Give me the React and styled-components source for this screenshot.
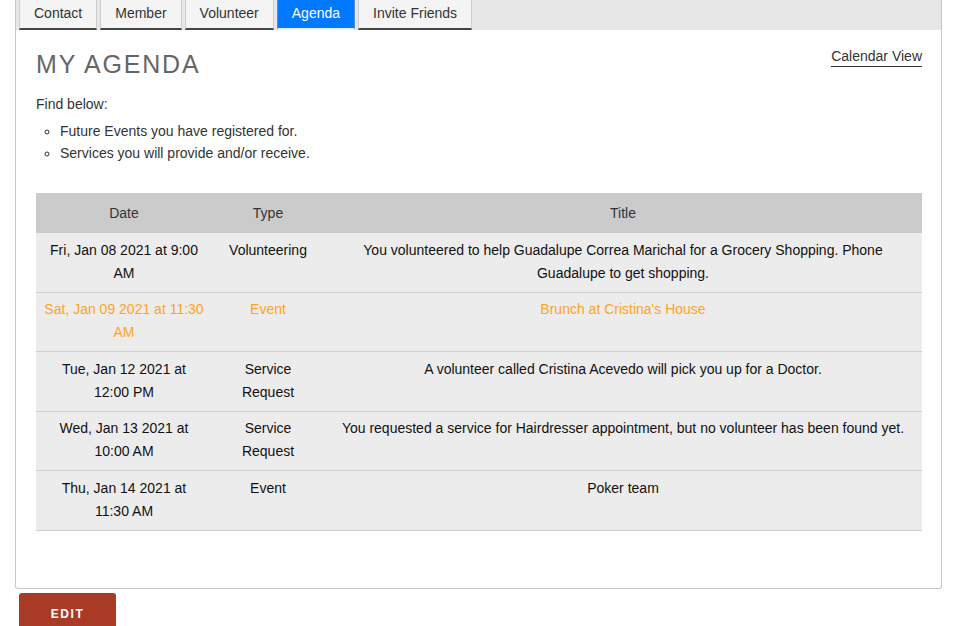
import React from 'react';
import styled, { createGlobalStyle } from 'styled-components';

const tabs = ['Contact', 'Member', 'Volunteer', 'Agenda', 'Invite Friends'];

const rows = [
  {
    date: 'Fri, Jan 08 2021 at 9:00 AM',
    type: 'Volunteering',
    title: 'You volunteered to help Guadalupe Correa Marichal for a Grocery Shopping. Phone Guadalupe to get shopping.',
  },
  {
    date: 'Sat, Jan 09 2021 at 11:30 AM',
    type: 'Event',
    title: "Brunch at Cristina's House",
    highlight: true,
  },
  {
    date: 'Tue, Jan 12 2021 at 12:00 PM',
    type: 'Service Request',
    title: 'A volunteer called Cristina Acevedo will pick you up for a Doctor.',
  },
  {
    date: 'Wed, Jan 13 2021 at 10:00 AM',
    type: 'Service Request',
    title: 'You requested a service for Hairdresser appointment, but no volunteer has been found yet.',
  },
  {
    date: 'Thu, Jan 14 2021 at 11:30 AM',
    type: 'Event',
    title: 'Poker team',
  },
];

export default function App() {
  return (
    <>
      <GlobalStyle />
      <Page>
        <Panel>
          <TabBar>
            {tabs.map((t) => (
              <Tab key={t} active={t === 'Agenda'}>{t}</Tab>
            ))}
          </TabBar>
          <Content>
            <Header>
              <Title>MY AGENDA</Title>
              <CalendarLink href="#">Calendar View</CalendarLink>
            </Header>
            <Intro>Find below:</Intro>
            <List>
              <li>Future Events you have registered for.</li>
              <li>Services you will provide and/or receive.</li>
            </List>
            <Table>
              <colgroup>
                <col style={{ width: 176 }} />
                <col style={{ width: 112 }} />
                <col />
              </colgroup>
              <thead>
                <tr>
                  <Th>Date</Th>
                  <Th>Type</Th>
                  <Th>Title</Th>
                </tr>
              </thead>
              <tbody>
                {rows.map((r) => (
                  <Row key={r.date} highlight={r.highlight}>
                    <Td>{r.date}</Td>
                    <Td>{r.type}</Td>
                    <Td>{r.title}</Td>
                  </Row>
                ))}
              </tbody>
            </Table>
          </Content>
        </Panel>
        <EditButton>EDIT</EditButton>
      </Page>
    </>
  );
}

const GlobalStyle = createGlobalStyle`
  html, body {
    margin: 0;
    padding: 0;
    background: #fff;
    font-family: Arial, "Liberation Sans", sans-serif;
    color: #333;
    overflow: hidden;
  }
`;

const Page = styled.div`
  padding: 0 14px 0 15px;
`;

const Panel = styled.div`
  border: 1px solid #c8c8c8;
  border-top: none;
  border-radius: 0 0 3px 3px;
  background: #fff;
`;

const TabBar = styled.div`
  display: flex;
  gap: 3px;
  padding-left: 3px;
  background: #e7e7e7;
  height: 30px;
`;

const Tab = styled.div`
  box-sizing: border-box;
  height: 30px;
  padding: 0 14px 2px;
  display: flex;
  align-items: center;
  font-size: 14px;
  background: ${(p) => (p.active ? '#0078ff' : '#f4f4f4')};
  color: ${(p) => (p.active ? '#fff' : '#333')};
  border-left: 1px solid ${(p) => (p.active ? '#5a8fd0' : '#cdcdcd')};
  border-right: 1px solid ${(p) => (p.active ? '#5a8fd0' : '#cdcdcd')};
  border-bottom: 2px solid ${(p) => (p.active ? '#e8f1ff' : '#454545')};
`;

const Content = styled.div`
  padding: 19px 19px 57px 20px;
`;

const Header = styled.div`
  display: flex;
  justify-content: space-between;
  align-items: flex-start;
`;

const Title = styled.h1`
  margin: 0;
  font-size: 25px;
  line-height: 30px;
  font-weight: normal;
  letter-spacing: 1.8px;
  color: #666;
`;

const CalendarLink = styled.a`
  margin-top: -1px;
  font-size: 14px;
  line-height: 16px;
  padding-bottom: 2px;
  color: #333;
  text-decoration: none;
  border-bottom: 1px solid #333;
`;

const Intro = styled.p`
  margin: 14px 0 0;
  font-size: 14px;
  line-height: 22px;
`;

const List = styled.ul`
  margin: 5px 0 0;
  padding-left: 24px;
  list-style: circle;
  font-size: 14px;
  line-height: 22px;
`;

const Table = styled.table`
  margin-top: 29px;
  width: 100%;
  border-collapse: collapse;
  table-layout: fixed;
  font-size: 14px;
`;

const Th = styled.th`
  height: 40px;
  padding: 0 6px;
  background: #cbcbcb;
  font-weight: normal;
  color: #333;
  text-align: center;
  vertical-align: middle;
`;

const Row = styled.tr`
  background: #ececec;
  border-bottom: 1px solid #cfcfcf;
  color: ${(p) => (p.highlight ? '#ffa41b' : '#111')};
`;

const Td = styled.td`
  padding: 5.5px 8px 6.5px;
  line-height: 23.25px;
  text-align: center;
  vertical-align: top;
`;

const EditButton = styled.button`
  margin: 4px 0 0 4px;
  width: 97px;
  height: 42px;
  border: none;
  border-radius: 3px;
  background: #a93a26;
  color: #fff;
  font-family: Arial, "Liberation Sans", sans-serif;
  font-weight: bold;
  font-size: 12px;
  letter-spacing: 1.6px;
`;
